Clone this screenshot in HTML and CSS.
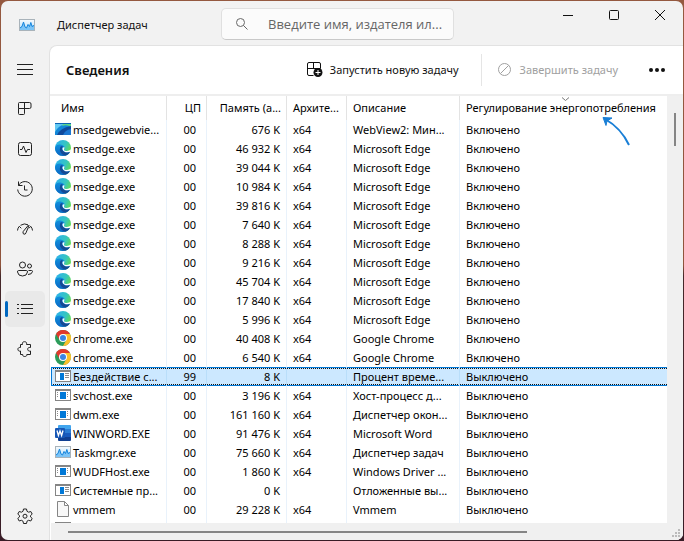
FILE: index.html
```html
<!DOCTYPE html>
<html lang="ru">
<head>
<meta charset="utf-8">
<title>Диспетчер задач</title>
<link rel="stylesheet" href="styles.css">
</head>
<body>
<svg class="sprite" aria-hidden="true">
  <defs>
    <linearGradient id="edge-top" x1="0" y1="0" x2="1" y2=".5"><stop offset=".2" stop-color="#2fb4e4"/><stop offset=".65" stop-color="#35c6c0"/><stop offset="1" stop-color="#62dc58"/></linearGradient>
    <linearGradient id="edge-body" x1="0" y1="0" x2="0" y2="1"><stop offset="0" stop-color="#0f8fdc"/><stop offset="1" stop-color="#0c66c4"/></linearGradient>
    <linearGradient id="chart-bg" x1="0" y1="0" x2="0" y2="1"><stop offset="0" stop-color="#f4f9fd"/><stop offset="1" stop-color="#b9e0fa"/></linearGradient>
  </defs>
  <symbol id="edge" viewBox="0 0 16 16">
    <circle cx="8" cy="8" r="8" fill="url(#edge-top)"/>
    <path d="M0 8C.5 5.2 3 4.3 5.500 4.600C8 4.900 9.800 6.500 9.600 8C9.500 9 8.800 9.300 9 10C9.500 11.800 13 12.300 15 11.700C13.500 14.500 11 16 8 16C3.500 16 0 12.500 0 8Z" fill="url(#edge-body)"/>
    <path d="M5.500 6.800C3.800 10 5.500 14.800 10.500 15.600C12.600 14.900 14.200 13.600 15 11.900C11.500 13.500 7.500 12 7 9C6.900 8 7.200 7.200 7.900 6.600C7 6.200 6 6.200 5.500 6.800Z" fill="#144a94"/>
    <path d="M9.500 7.500C9.600 8.800 8.600 9.100 9 10C9.700 11.200 12.800 11.300 14.500 10.200L16 9.500L15.600 11.600C12.500 13.200 8 12.200 7.500 9.200C7.300 8 8.200 6.800 9.500 7.500Z" fill="#fff"/>
  </symbol>
  <symbol id="webview" viewBox="0 0 16 12">
    <path fill="#1487d8" d="M0 0H16V12H0z"/><path fill="#62c8f2" d="M0 1H10Q3 3 0 9z"/><path fill="#5bd68a" d="M8 1H16V4Q12 1 7 3z"/><path fill="#104a9c" d="M2 12Q5 5 16 3V12z"/><path fill="#1c77d2" d="M8 12Q10 7 16 6V12z"/><path fill="#0b65b5" d="M0 0H16V1H0z"/>
  </symbol>
  <symbol id="chrome" viewBox="0 0 16 16">
    <circle cx="8" cy="8" r="8" fill="#2c9c5a"/>
    <path d="M1.070 4A8 8 0 0 1 14.930 4H8L4.540 10z" fill="#e2392d"/>
    <path d="M14.930 4A8 8 0 0 1 8 16L11.460 10L8 4z" fill="#fbc02b"/>
    <circle cx="8" cy="8" r="4" fill="#fff"/><circle cx="8" cy="8" r="3" fill="#3a84e4"/>
  </symbol>
  <symbol id="app" viewBox="0 0 16 12">
    <path fill="#858585" d="M0 0H16V12H0z"/><path fill="#fff" d="M1 2H15V11H1z"/><path fill="#0078d7" d="M5 3H11V10H5z"/><path stroke="#8c8c8c" stroke-dasharray="1 1" d="M2 3.500H4M2 5.500H4M2 7.500H4M12 3.500H14M12 5.500H14M12 7.500H14"/>
  </symbol>
  <symbol id="sys" viewBox="0 0 16 12">
    <path fill="#858585" d="M0 0H16V12H0z"/><path fill="#fff" d="M1 2H15V11H1z"/><path fill="#0078d7" d="M5 3H9V10H5z"/><path stroke="#8c8c8c" d="M10 3.500H14M10 5.500H14M10 7.500H14"/>
  </symbol>
  <symbol id="word" viewBox="0 0 16 16">
    <path fill="#41a5ee" d="M4 0H15Q16 0 16 1V4H3V1Q3 0 4 0z"/><path fill="#2b7cd3" d="M3 4H16V8H3z"/><path fill="#185abd" d="M3 8H16V12H3z"/><path fill="#103f91" d="M3 12H16V15Q16 16 15 16H4Q3 16 3 15z"/><rect y="3" width="10" height="10" rx="1" fill="#1857b5"/><path fill="none" stroke="#fff" stroke-width="1.300" d="M2 5.500L3.400 10.500L5 6L6.600 10.500L8 5.500"/>
  </symbol>
  <symbol id="chart" viewBox="0 0 16 12">
    <path fill="#a9b3ba" d="M0 0H16V12H0z"/><path fill="url(#chart-bg)" d="M1 1H15V11H1z"/><path fill="#7cc4f7" d="M1 9L3 7L4.500 2.500L6 8L7.500 9L9 5L10.500 7L12 3L13 7L15 6V11H1z"/><path fill="none" stroke="#1685dc" d="M1 9L3 7.500L4.500 3L6 8L7.500 9L9 5.500L10.500 7.500L11.800 3.500L13 7.500L15 6.500"/>
  </symbol>
  <symbol id="file" viewBox="0 0 16 16">
    <path fill="#f8f8f8" stroke="#858585" d="M2.500 .5H9.500L13.500 4.500V15.500H2.500zM9.500 .5V4.500H13.500"/>
  </symbol>
</svg>

<div class="window">
  <header class="titlebar">
    <div class="brand"><svg class="brand-icon"><use href="#chart"/></svg><span>Диспетчер задач</span></div>
    <label class="search">
      <svg viewBox="0 0 12 12"><circle cx="4.500" cy="4.500" r="4"/><path d="M7.500 7.500L11.500 11.500"/></svg>
      <input type="text" aria-label="Поиск" placeholder="Введите имя, издателя ил...">
    </label>
    <div class="caption">
      <button aria-label="Свернуть"><svg viewBox="0 0 10 10"><path d="M0 5.500H10"/></svg></button>
      <button aria-label="Развернуть"><svg viewBox="0 0 10 10"><rect x=".5" y=".5" width="9" height="9" rx="1"/></svg></button>
      <button aria-label="Закрыть"><svg viewBox="0 0 10 10"><path d="M0 0L10 10M10 0L0 10"/></svg></button>
    </div>
  </header>

  <nav class="sidebar">
    <button aria-label="Меню"><svg viewBox="0 0 16 16"><path d="M0 3.500H16M0 8.500H16M0 13.500H16"/></svg></button>
    <button aria-label="Процессы"><svg viewBox="0 0 16 16"><path d="M2.500 1.500H12.500Q14 1.500 14 3V6Q14 7.500 12.500 7.500H1.500V12.500Q1.500 13.500 2.500 13.500H6.500Q7.500 13.500 7.500 12.500V1.500M1.500 7.500V2.500Q1.500 1.500 2.500 1.500"/></svg></button>
    <button aria-label="Производительность"><svg viewBox="0 0 16 16"><rect x="1.500" y="1.500" width="13" height="13" rx="2"/><path d="M3 8.500H5L6.500 5L9 11.500L10.500 8.500H13"/></svg></button>
    <button aria-label="Журнал приложений"><svg viewBox="0 0 16 16"><path d="M1.500 .5V4.500H5.500M1.500 4.500A7.300 7.300 0 1 1 .7 8.500M7.500 4.500V9H10.500"/></svg></button>
    <button aria-label="Автозагрузка"><svg viewBox="0 0 16 16"><path d="M.5 9.500Q.7 7 2.300 5.300L4.300 7.300M3.500 4.300Q7.500 1.800 11 3.800M15.500 9.500Q15.300 7 13.700 5.300L12 7.300M11.500 4L6.200 10.500Q5.300 12.700 7 13.200Q8.500 13.500 9 11.800L12 4.500z"/></svg></button>
    <button aria-label="Пользователи"><svg viewBox="0 0 16 16"><circle cx="5.500" cy="4" r="3"/><circle cx="12.500" cy="5" r="2"/><path d="M1.500 9.500H9.500Q10.500 9.500 10.500 11Q10 15 5.500 15Q1 15 .5 11Q.5 9.500 1.500 9.500M11.500 9.500H14.500Q15.500 9.500 15.500 10.500Q15 13.500 11 13.500"/></svg></button>
    <button class="current" aria-label="Сведения"><svg viewBox="0 0 16 16"><path d="M0 3.500H2M4 3.500H16M0 7.500H2M4 7.500H16M0 12.500H2M4 12.500H16"/></svg></button>
    <button aria-label="Службы"><svg viewBox="0 0 16 16"><path d="M3.500 3.500H5.500C5 1.500 6 .7 7.500 .7C9 .7 10 1.500 9.500 3.500H13.500V6.500C11.500 6.200 10.700 7 10.700 8.200C10.700 9.500 11.700 10.500 13.500 10V13.500H9.800C10 15 9 15.500 7.700 15.500C6.500 15.500 5.500 15 5.700 13.500H3.500V10C2 10.500 .9 9.700 .9 8.200C.9 7 2 6.200 3.500 6.500z"/></svg></button>
    <button class="settings" aria-label="Параметры"><svg viewBox="0 0 16 16"><path d="M6.500 1H9.500L10 3.300L11.600 4.200L13.800 3.500L15.200 6.100L13.500 7.600V8.900L15.200 10.400L13.800 13L11.600 12.300L10 13.200L9.500 15.500H6.500L6 13.200L4.400 12.300L2.200 13L.8 10.400L2.500 8.900V7.600L.8 6.100L2.200 3.500L4.400 4.200L6 3.300z"/><circle cx="8" cy="8.200" r="2"/></svg></button>
  </nav>

  <main class="content">
    <div class="toolbar">
      <h1>Сведения</h1>
      <button class="tool"><svg viewBox="0 0 16 16"><path d="M6.500 13.500H2Q.5 13.500 .5 12V2Q.5 .5 2 .5H12Q13.500 .5 13.500 2V6.500M.5 6.500H13.500M6.500 .5V6.500H.5"/><circle class="solid" cx="11" cy="10.500" r="4.500"/><path class="plus" d="M8.500 10.500H13.500M11 8V13"/></svg>Запустить новую задачу</button>
      <button class="tool end" disabled><svg viewBox="0 0 16 16"><circle cx="7.500" cy="7.500" r="6"/><path d="M3.500 11.500L11.500 3.500"/></svg>Завершить задачу</button>
      <button class="more" aria-label="Дополнительно"><i></i><i></i><i></i></button>
    </div>

    <div class="list">
      <div class="viewport">
        <table>
          <colgroup><col class="c-name"><col class="c-cpu"><col class="c-mem"><col class="c-arch"><col class="c-desc"><col></colgroup>
          <thead><tr><th>Имя</th><th>ЦП</th><th>Память (а...</th><th>Архите...</th><th>Описание</th><th>Регулирование энергопотребления<svg class="sort" viewBox="0 0 7 4"><path d="M0 .5L3.500 3.500L7 .5"/></svg></th></tr></thead>
          <tbody>
            <tr><td><svg><use href="#webview"/></svg>msedgewebvie...</td><td>00</td><td>676 K</td><td>x64</td><td>WebView2: Мин...</td><td>Включено</td></tr>
            <tr><td><svg><use href="#edge"/></svg>msedge.exe</td><td>00</td><td>46 932 K</td><td>x64</td><td>Microsoft Edge</td><td>Включено</td></tr>
            <tr><td><svg><use href="#edge"/></svg>msedge.exe</td><td>00</td><td>39 044 K</td><td>x64</td><td>Microsoft Edge</td><td>Включено</td></tr>
            <tr><td><svg><use href="#edge"/></svg>msedge.exe</td><td>00</td><td>10 984 K</td><td>x64</td><td>Microsoft Edge</td><td>Включено</td></tr>
            <tr><td><svg><use href="#edge"/></svg>msedge.exe</td><td>00</td><td>39 816 K</td><td>x64</td><td>Microsoft Edge</td><td>Включено</td></tr>
            <tr><td><svg><use href="#edge"/></svg>msedge.exe</td><td>00</td><td>7 640 K</td><td>x64</td><td>Microsoft Edge</td><td>Включено</td></tr>
            <tr><td><svg><use href="#edge"/></svg>msedge.exe</td><td>00</td><td>8 288 K</td><td>x64</td><td>Microsoft Edge</td><td>Включено</td></tr>
            <tr><td><svg><use href="#edge"/></svg>msedge.exe</td><td>00</td><td>9 216 K</td><td>x64</td><td>Microsoft Edge</td><td>Включено</td></tr>
            <tr><td><svg><use href="#edge"/></svg>msedge.exe</td><td>00</td><td>45 704 K</td><td>x64</td><td>Microsoft Edge</td><td>Включено</td></tr>
            <tr><td><svg><use href="#edge"/></svg>msedge.exe</td><td>00</td><td>17 840 K</td><td>x64</td><td>Microsoft Edge</td><td>Включено</td></tr>
            <tr><td><svg><use href="#edge"/></svg>msedge.exe</td><td>00</td><td>5 996 K</td><td>x64</td><td>Microsoft Edge</td><td>Включено</td></tr>
            <tr><td><svg><use href="#chrome"/></svg>chrome.exe</td><td>00</td><td>40 408 K</td><td>x64</td><td>Google Chrome</td><td>Включено</td></tr>
            <tr><td><svg><use href="#chrome"/></svg>chrome.exe</td><td>00</td><td>6 540 K</td><td>x64</td><td>Google Chrome</td><td>Включено</td></tr>
            <tr class="selected"><td><svg><use href="#sys"/></svg>Бездействие с...</td><td>99</td><td>8 K</td><td></td><td>Процент време...</td><td>Выключено</td></tr>
            <tr><td><svg><use href="#app"/></svg>svchost.exe</td><td>00</td><td>3 196 K</td><td>x64</td><td>Хост-процесс д...</td><td>Выключено</td></tr>
            <tr><td><svg><use href="#app"/></svg>dwm.exe</td><td>00</td><td>161 160 K</td><td>x64</td><td>Диспетчер окон...</td><td>Выключено</td></tr>
            <tr><td><svg><use href="#word"/></svg>WINWORD.EXE</td><td>00</td><td>91 476 K</td><td>x64</td><td>Microsoft Word</td><td>Выключено</td></tr>
            <tr><td><svg><use href="#chart"/></svg>Taskmgr.exe</td><td>00</td><td>75 660 K</td><td>x64</td><td>Диспетчер задач</td><td>Выключено</td></tr>
            <tr><td><svg><use href="#app"/></svg>WUDFHost.exe</td><td>00</td><td>1 860 K</td><td>x64</td><td>Windows Driver ...</td><td>Выключено</td></tr>
            <tr><td><svg><use href="#sys"/></svg>Системные пр...</td><td>00</td><td>0 K</td><td></td><td>Отложенные вы...</td><td>Выключено</td></tr>
            <tr><td><svg><use href="#file"/></svg>vmmem</td><td>00</td><td>29 228 K</td><td>x64</td><td>Vmmem</td><td>Выключено</td></tr>
            <tr><td><svg><use href="#app"/></svg></td><td></td><td></td><td></td><td></td><td></td></tr>
          </tbody>
        </table>
        <svg class="pointer" viewBox="0 0 30 32"><path class="tail" d="M4 3Q20 12 28 29"/><path class="head" d="M11 2L2 1.500L5 9.500L6 5z"/></svg>
      </div>
      <div class="vscroll"><div></div></div>
      <div class="hscroll"><div></div></div>
      <svg class="grip" viewBox="0 0 9 9"><path d="M6 0H8V2H6zM3 3H5V5H3zM6 3H8V5H6zM0 6H2V8H0zM3 6H5V8H3zM6 6H8V8H6z"/></svg>
    </div>
  </main>
</div>
</body>
</html>
```
FILE: styles.css
```css
* { box-sizing: border-box; }

body {
  margin: 0;
  background: linear-gradient(#955940 0, #8f543c 49%, #45282a 51%, #381c26 100%);
  color: #111;
  font: 11px/18px "Noto Sans", "Open Sans", sans-serif;
}

button, input { font: inherit; color: inherit; }
button { display: flex; align-items: center; justify-content: center; padding: 0; border: 0; background: none; }
svg { display: block; flex: none; fill: none; stroke: currentColor; }
.sprite { position: absolute; width: 0; height: 0; }
symbol, use { stroke: none; }

.window {
  display: grid;
  grid-template: 44px minmax(0, 1fr) / 48px minmax(0, 1fr);
  height: 100vh;
  border: 1px solid transparent;
  border-radius: 8px;
  background: #f2f2f2 padding-box;
  overflow: hidden;
}

.titlebar { grid-column: 1 / -1; display: flex; align-items: flex-start; }
.brand { display: flex; align-items: center; gap: 22px; flex: 0 0 220px; height: 48px; padding-left: 18px; }
.brand-icon { width: 16px; height: 12px; }
.search {
  display: flex; align-items: center; gap: 20px;
  flex: 0 1 233px; height: 32px; margin-top: 7px; padding: 0 8px 0 14px;
  border: 1px solid #e0e0e0; border-bottom-color: #c9c9c9; border-radius: 5px;
  background: #fbfbfb; color: #666;
}
.search svg { width: 12px; height: 12px; }
.search input { flex: 1; min-width: 0; padding: 0; border: 0; outline: 0; background: none; font: 13px "Open Sans", sans-serif; }
.search input::placeholder { color: #666; opacity: 1; }
.caption { display: flex; margin-left: auto; }
.caption button { width: 46px; height: 28px; }
.caption svg { width: 10px; height: 10px; }

.sidebar { display: flex; flex-direction: column; gap: 4px; padding: 6px 4px; }
.sidebar button { position: relative; height: 36px; border-radius: 5px; color: #222; }
.sidebar svg { width: 16px; height: 16px; }
.sidebar .current { background: #e9e9e9; }
.sidebar .current::before {
  content: ""; position: absolute; left: 0; top: 10px; width: 3px; height: 16px;
  border-radius: 2px; background: #0067c0;
}
.sidebar .settings { margin-top: auto; }

.content {
  display: flex; flex-direction: column; min-height: 0;
  border: solid #e2e2e2; border-width: 1px 0 0 1px; border-top-left-radius: 8px;
  background: #fff; overflow: hidden;
}
.toolbar { display: flex; align-items: center; flex: 0 0 50px; padding: 0 18px 0 16px; border-bottom: 2px solid #eee; }
h1 { margin: 0 auto 0 0; font-size: 13px; font-weight: 600; }
.tool { gap: 7px; height: 32px; }
.tool svg { width: 16px; height: 16px; }
.solid { fill: #111; stroke: none; }
.plus { stroke: #fff; }
.end { margin-left: 22px; padding-left: 15px; border-left: 1px solid #e5e5e5; color: #a0a0a0; }
.more { gap: 2px; margin-left: 31px; height: 32px; }
.more i { width: 4px; height: 4px; border-radius: 2px; background: #111; }

.list {
  display: grid; flex: 1; min-height: 0; padding-left: 1px;
  grid-template: minmax(0, 1fr) 17px / minmax(0, 1fr) 16px;
}
.viewport { position: relative; overflow: hidden; }
table { width: 100%; table-layout: fixed; border-collapse: separate; border-spacing: 0; color: #000; }
.c-name { width: 116px; }
.c-cpu { width: 40px; }
.c-mem { width: 80px; }
.c-arch { width: 60px; }
.c-desc { width: 113px; }
th, td { padding: 0 6px; text-align: left; font-weight: 400; white-space: nowrap; overflow: hidden; border-right: 1px solid #e9f2fb; }
th:last-child { padding-right: 0; }
th { position: relative; height: 24px; border-color: #e3e3e3; }
td { height: 19px; line-height: 19px; }
th:last-child, td:last-child { border-right: 0; }
th:first-child { padding-left: 10px; }
td:first-child { padding: 0 0 0 4px; }
th:nth-child(2), th:nth-child(3), td:nth-child(2), td:nth-child(3) { text-align: right; }
th:nth-child(2), th:nth-child(3) { padding: 0 5px; }
td:nth-child(2) { padding-right: 10px; }
td svg { float: left; width: 16px; height: 16px; margin: 1px 2px 2px 0; }
.selected td {
  border-right-color: #b9defa;
  background: repeating-linear-gradient(90deg, #111 0 1px, #cce8ff 1px 2px) 0 1px / 100% 1px no-repeat,
    repeating-linear-gradient(90deg, #111 0 1px, #cce8ff 1px 2px) 0 17px / 100% 1px no-repeat, #cce8ff;
  box-shadow: inset 0 1px #0078d7, inset 0 -1px #0078d7;
}
.selected td:first-child { box-shadow: inset 1px 1px #0078d7, inset 0 -1px #0078d7; }
.sort { position: absolute; top: 1px; left: 102px; width: 7px; height: 4px; color: #777; }
.pointer { position: absolute; left: 550px; top: 20px; width: 30px; height: 32px; }
.tail { stroke: #1a7fd6; stroke-width: 2; }
.head { fill: #1a7fd6; stroke: #1a7fd6; }

.vscroll, .hscroll { background: #f0f0f0; }
.vscroll { grid-row: 1 / -1; grid-column: 2; padding: 17px 7px; }
.vscroll div { width: 2px; height: 33px; background: #858585; }
.hscroll { padding: 8px 140px 0 17px; }
.hscroll div { height: 2px; background: #858585; }
.grip { grid-area: 2 / 2; place-self: end; width: 9px; height: 9px; margin: 0 2px 2px 0; fill: #bbb; stroke: none; }
```
